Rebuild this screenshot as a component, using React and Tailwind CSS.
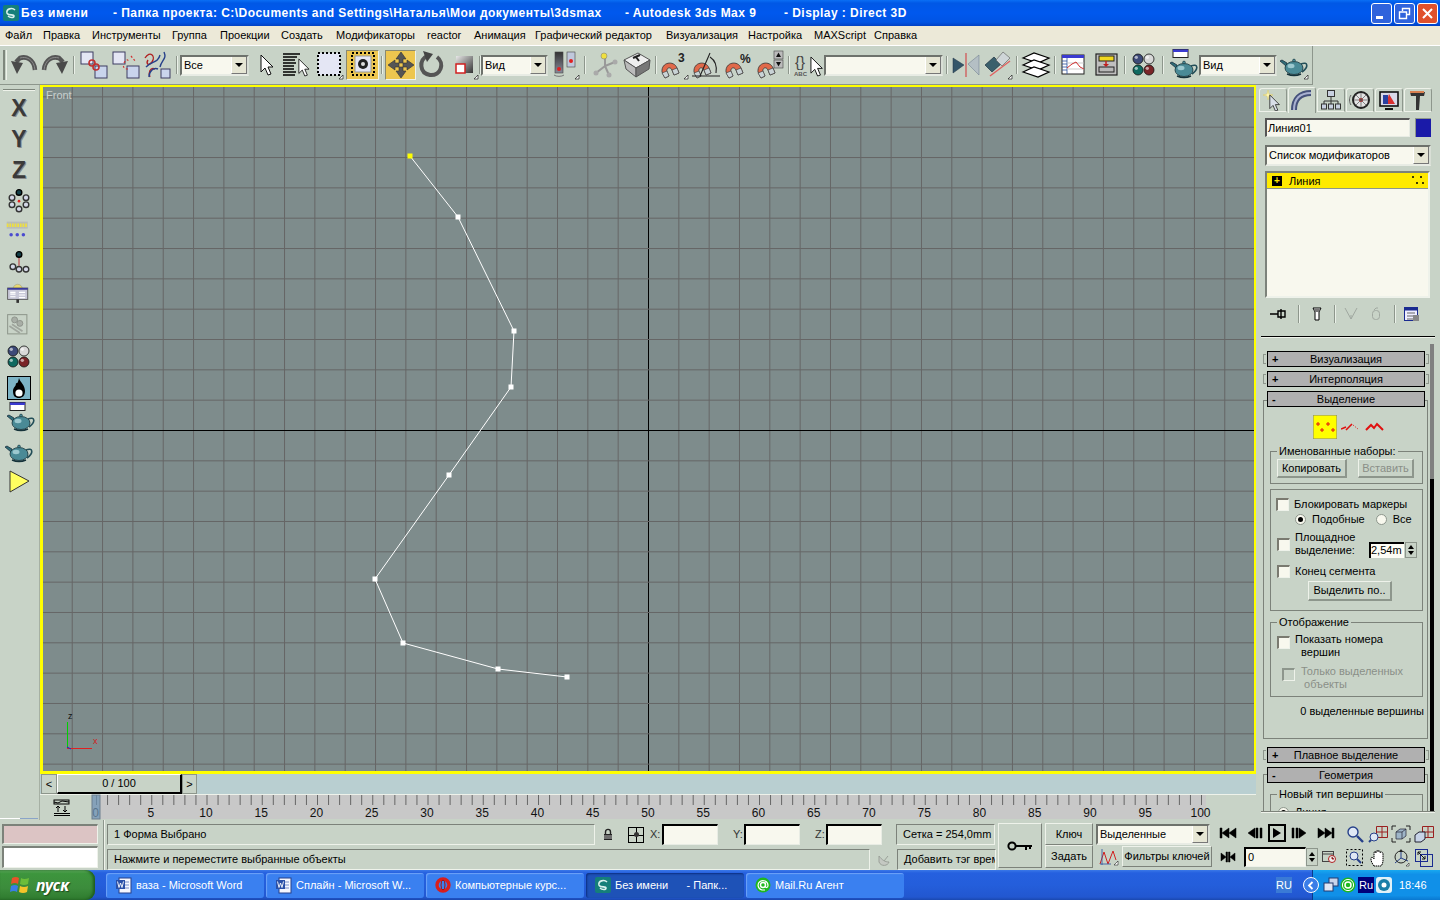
import React from 'react';

const Ic = ({ children, size = 32, box = '0 0 32 32', className = '' }) => (
  <svg width={size} height={size} viewBox={box} className={`block shrink-0 ${className}`}>{children}</svg>
);

const Fly = () => <polygon points="26,30 30,30 30,26" fill="#fff" stroke="#000" strokeWidth="0.6" />;

const Sphere = ({ cx, cy, r = 5, fill }) => (
  <g>
    <circle cx={cx} cy={cy} r={r} fill={fill} stroke="#111" strokeWidth="0.8" />
    <circle cx={cx - r / 3} cy={cy - r / 3} r={r / 3} fill="#fff" opacity="0.6" />
  </g>
);

const Spheres = () => (
  <Ic>
    <Sphere cx={10} cy={10} fill="#3d4a78" />
    <Sphere cx={21} cy={10} fill="#d8d8d8" />
    <Sphere cx={10} cy={21} fill="#0f6a60" />
    <Sphere cx={21} cy={21} fill="#7a2528" />
  </Ic>
);

const TeapotShape = () => (
  <g>
    <path d="M8 17 L2 12 L4 11 L9 14 Z" fill="#2f6d78" stroke="#123" strokeWidth="0.7" />
    <path d="M23 15 C30 12 31 18 24 23" fill="none" stroke="#234e58" strokeWidth="1.6" />
    <ellipse cx="16" cy="19" rx="9" ry="6.5" fill="#4a8a96" stroke="#15323a" strokeWidth="0.8" />
    <ellipse cx="13" cy="17" rx="3.5" ry="2.2" fill="#9cc8cf" />
    <path d="M9 25 Q16 28 23 25" stroke="#15323a" strokeWidth="1.4" fill="none" />
    <circle cx="16" cy="11.5" r="1.4" fill="#4a8a96" stroke="#15323a" strokeWidth="0.6" />
  </g>
);

const Teapot = ({ fly }) => <Ic><TeapotShape />{fly && <Fly />}</Ic>;

const RenderTeapot = () => (
  <Ic>
    <rect x="7" y="0.5" width="15" height="8" fill="#fff" stroke="#222" />
    <rect x="7" y="0.5" width="15" height="2.5" fill="#3a3ad0" />
    <g transform="translate(2 2)"><TeapotShape /></g>
  </Ic>
);

const Magnet = ({ x = 0, y = 0 }) => (
  <g transform={`translate(${x} ${y})`}>
    <path d="M6 25 L3 19 C2 9 15 7 18 15 L20 20 L15 22 L13 17 C11 13 7 15 8 19 L10 23 Z" fill="#e0694a" stroke="#333" strokeWidth="0.8" />
    <path d="M6 25 L3 20 L8 18 L10 23 Z M15 22 L20 20 L18 15 L13 17 Z" fill="#c9d3d6" stroke="#333" strokeWidth="0.6" />
  </g>
);

const Arrow = ({ x = 0, y = 0, s = 1 }) => (
  <g transform={`translate(${x} ${y}) scale(${s})`}>
    <path d="M1 0 L1 17 L5 13 L8 20 L11 19 L8 12 L13 12 Z" fill="#fff" stroke="#111" strokeWidth="1" />
  </g>
);

const Undo = ({ flip }) => (
  <Ic>
    <g transform={flip ? 'translate(32 0) scale(-1 1)' : undefined}>
      <path d="M27 21 C26 10 18 7 12 9 L8 13" fill="none" stroke="#555" strokeWidth="4.5" />
      <path d="M27 21 C26 10 18 7 12 9" fill="none" stroke="#8a8a8a" strokeWidth="1" />
      <polygon points="3,12 15,14 9,25" fill="#4a4a4a" />
    </g>
  </Ic>
);

const LinkIcon = ({ broken }) => (
  <Ic>
    <rect x="3" y="3" width="12" height="12" fill="#e4e6f4" stroke="#3c3c62" />
    <rect x="17" y="17" width="12" height="12" fill="#c9d4ec" stroke="#3c3c62" />
    {broken ? (
      <g fill="none" stroke="#d03030" strokeWidth="1.2" strokeDasharray="2 2">
        <path d="M14 14 C16 10 19 10 18 13" />
        <path d="M18 20 C13 20 13 16 14 17" />
        <path d="M21 7 L26 13" />
      </g>
    ) : (
      <g fill="none" stroke="#c03030" strokeWidth="1.6">
        <circle cx="14" cy="14" r="3" />
        <circle cx="18" cy="18" r="3" />
      </g>
    )}
  </Ic>
);

const BindIcon = () => (
  <Ic>
    <path d="M3 9 C8 1 14 7 10 13 C6 18 4 14 6 11 M13 20 C8 18 6 24 8 28" fill="none" stroke="#b02020" strokeWidth="1.4" />
    <path d="M4 18 C10 12 16 14 18 6 M18 18 C20 10 25 10 22 3 M7 28 C7 22 12 18 16 20" fill="none" stroke="#26408a" strokeWidth="1.4" />
    <rect x="19" y="20" width="9" height="9" fill="#c9d4ec" stroke="#3c3c62" />
  </Ic>
);

const NameSel = () => (
  <Ic>
    <g stroke="#000" strokeWidth="1.3">
      <path d="M2 5H19M2 8H16M2 11H14M2 14H15M2 17H13M2 20H13M2 23H15M2 26H14" />
    </g>
    <Arrow x={17} y={10} s={0.85} />
  </Ic>
);

const RectSel = ({ circle, fly }) => (
  <Ic>
    <rect x="5" y="4" width="22" height="22" fill={circle ? 'none' : '#e4e6f4'} stroke="#000" strokeWidth="2" strokeDasharray="2 2" />
    {circle ? (
      <g>
        <rect x="8" y="7" width="16" height="16" fill="#e4e6f4" stroke="#999" />
        <circle cx="16" cy="15" r="5" fill="#222" />
        <circle cx="16" cy="15" r="2" fill="#ddd" />
      </g>
    ) : null}
    {fly && <Fly />}
  </Ic>
);

const MoveIcon = () => (
  <Ic>
    <g fill="#555" stroke="#333" strokeWidth="0.6">
      <polygon points="16,3 21,10 18,10 18,14 14,14 14,10 11,10" />
      <polygon points="16,29 21,22 18,22 18,18 14,18 14,22 11,22" />
      <polygon points="3,16 10,11 10,14 14,14 14,18 10,18 10,21" />
      <polygon points="29,16 22,11 22,14 18,14 18,18 22,18 22,21" />
    </g>
  </Ic>
);

const RotateIcon = () => (
  <Ic>
    <path d="M11 7 C3 11 3 24 14 26 C25 27 29 14 21 8" fill="none" stroke="#555" strokeWidth="4" />
    <polygon points="7,2 17,5 11,13" fill="#444" />
  </Ic>
);

const ScaleIcon = () => (
  <Ic>
    <defs>
      <linearGradient id="scaleG" x1="0" y1="0" x2="1" y2="1">
        <stop offset="0" stopColor="#e8e8e8" />
        <stop offset="1" stopColor="#333" />
      </linearGradient>
    </defs>
    <rect x="8" y="7" width="17" height="17" fill="url(#scaleG)" />
    <rect x="8" y="15" width="9" height="9" fill="#fff" stroke="#d02020" strokeWidth="1.5" />
    <Fly />
  </Ic>
);

const PivotIcon = () => (
  <Ic>
    <defs>
      <linearGradient id="pivG" x1="0" y1="0" x2="0" y2="1">
        <stop offset="0" stopColor="#333" />
        <stop offset="1" stopColor="#8a8a9a" />
      </linearGradient>
    </defs>
    <rect x="6" y="3" width="8" height="21" fill="url(#pivG)" stroke="#444" strokeWidth="0.6" />
    <rect x="18" y="3" width="8" height="15" fill="#c0c8dc" stroke="#444" strokeWidth="0.6" />
    <circle cx="10" cy="20" r="2" fill="#e02020" />
    <circle cx="22" cy="12" r="2" fill="#e02020" />
    <path d="M5 26 A6 3 0 0 0 15 26" fill="none" stroke="#777" />
    <Fly />
  </Ic>
);

const AxisIcon = () => (
  <Ic>
    <path d="M16 8V17L7 24M16 17L26 13M16 17L20 26" stroke="#999" strokeWidth="2" fill="none" />
    <circle cx="15" cy="7" r="3" fill="#f0e040" stroke="#777" strokeWidth="0.5" />
    <circle cx="7" cy="24" r="2.5" fill="#aaa" />
    <circle cx="26" cy="13" r="2.5" fill="#aaa" />
    <circle cx="20" cy="26" r="2.5" fill="#aaa" />
  </Ic>
);

const BoxIcon = () => (
  <Ic>
    <polygon points="3,11 17,4 29,11 15,19" fill="#eee" stroke="#555" />
    <polygon points="3,11 15,19 15,28 5,20" fill="#bbb" stroke="#555" />
    <polygon points="29,11 15,19 15,28 28,20" fill="#777" stroke="#555" />
    <path d="M12 9 L19 6 M15 8 L18 12" stroke="#222" strokeWidth="2" />
  </Ic>
);

const Snap3 = () => (
  <Ic>
    <Magnet x={1} y={4} />
    <text x="20" y="13" fontSize="12" fontWeight="700" fontFamily="Liberation Sans" fill="#222">3</text>
    <Fly />
  </Ic>
);

const SnapAngle = () => (
  <Ic>
    <Magnet x={1} y={4} />
    <path d="M2 27H30M10 27L20 4M20 8 C26 12 27 18 26 24" stroke="#222" strokeWidth="1.1" fill="none" />
  </Ic>
);

const SnapPct = () => (
  <Ic>
    <Magnet x={1} y={4} />
    <text x="18" y="14" fontSize="12" fontWeight="700" fontFamily="Liberation Sans" fill="#222">%</text>
  </Ic>
);

const SnapSpin = () => (
  <Ic>
    <Magnet x={1} y={4} />
    <rect x="20" y="2" width="9" height="8" fill="#bbb" stroke="#444" strokeWidth="0.6" />
    <rect x="20" y="11" width="9" height="8" fill="#bbb" stroke="#444" strokeWidth="0.6" />
    <polygon points="24.5,3.5 27,8 22,8" fill="#111" />
    <polygon points="24.5,17.5 27,13 22,13" fill="#111" />
  </Ic>
);

const NamedSets = () => (
  <Ic>
    <text x="3" y="18" fontSize="15" fontFamily="Liberation Sans" fill="#444">{'{}'}</text>
    <text x="2" y="27" fontSize="6" fontWeight="700" fontFamily="Liberation Sans" fill="#555">ABC</text>
    <Arrow x={18} y={8} s={0.95} />
  </Ic>
);

const MirrorIcon = () => (
  <Ic>
    <polygon points="3,9 14,16 3,24" fill="#34566a" stroke="#234" strokeWidth="0.5" />
    <path d="M16 4V28" stroke="#d06060" strokeWidth="1.4" />
    <polygon points="29,6 18,15 29,26" fill="#b4bfc4" stroke="#678" strokeWidth="0.5" />
  </Ic>
);

const AlignIcon = () => (
  <Ic>
    <polygon points="3,16 12,8 19,15 10,23" fill="#3a5f6c" stroke="#123" strokeWidth="0.6" />
    <polygon points="14,11 21,3 28,9 20,17" fill="#cfd6d8" stroke="#555" strokeWidth="0.6" />
    <path d="M8 27L28 12" stroke="#e06060" strokeWidth="1.4" />
    <Fly />
  </Ic>
);

const LayersIcon = () => (
  <Ic>
    {[4, 11, 18].map(y => (
      <polygon key={y} points={`3,${y + 5} 14,${y} 29,${y + 5} 18,${y + 10}`} fill="#fff" stroke="#000" strokeWidth="1.2" />
    ))}
  </Ic>
);

const CurveEd = () => (
  <Ic>
    <rect x="5" y="6" width="22" height="19" fill="#fff" stroke="#222" />
    <rect x="5" y="6" width="22" height="3" fill="#3a3ad0" />
    <path d="M10 9V25M5 12H10M5 15H10M5 18H10M5 21H10" stroke="#2a50a0" strokeWidth="0.8" />
    <path d="M10 20H27M10 14H27" stroke="#c0c0c0" strokeWidth="0.8" />
    <path d="M10 19 L15 15 L19 13 L23 18 L27 20" stroke="#d03030" fill="none" />
  </Ic>
);

const SchematicIcon = () => (
  <Ic>
    <rect x="6" y="5" width="21" height="21" fill="#bfbfbf" stroke="#222" strokeWidth="1.2" />
    <rect x="9" y="7" width="15" height="5" fill="#f0d820" stroke="#222" />
    <rect x="9" y="18" width="15" height="5" fill="#b8b8b8" stroke="#222" />
    <path d="M16 12V17" stroke="#c02020" strokeWidth="1.5" />
    <polygon points="13,15 19,15 16,18" fill="#c02020" />
  </Ic>
);

const Tb = ({ w = 'w-[32px]', active, children }) => (
  <div className={`${w} h-[30px] flex items-center justify-center shrink-0 ${active ? 'bg-[#edc64f] border-t border-l border-t-[#8a8a70] border-l-[#8a8a70] border-r border-b border-r-[#eef2ea] border-b-[#eef2ea]' : ''}`}>
    {children}
  </div>
);

const Sep = ({ w = 'w-[6px]' }) => (
  <div className={`${w} h-[30px] flex items-center justify-center shrink-0`}>
    <div className="w-[2px] h-[18px] border-l border-l-[#8d968c] border-r border-r-[#eaf0e8]" />
  </div>
);

const Dropdown = ({ w, h = 'h-[21px]', label, text = 'text-[11px]' }) => (
  <div className={`${w} ${h} shrink-0 flex items-center border-t-2 border-l-2 border-t-[#6e726c] border-l-[#6e726c] border-r-2 border-b-2 border-r-[#d9dfd6] border-b-[#e8ece4] bg-[#f8f8ee]`}>
    <span className={`flex-1 pl-[2px] truncate ${text}`}>{label}</span>
    <div className="w-[16px] h-full bg-[#e6e6d4] border-l border-l-white border-r border-r-[#777] border-b border-b-[#777] flex items-center justify-center">
      <div className="w-0 h-0 border-l-[4px] border-r-[4px] border-t-[4px] border-l-transparent border-r-transparent border-t-black" />
    </div>
  </div>
);

const menuItems = [
  ['Файл', 'w-[38px]'], ['Правка', 'w-[49px]'], ['Инструменты', 'w-[80px]'], ['Группа', 'w-[48px]'],
  ['Проекции', 'w-[61px]'], ['Создать', 'w-[55px]'], ['Модификаторы', 'w-[91px]'], ['reactor', 'w-[47px]'],
  ['Анимация', 'w-[61px]'], ['Графический редактор', 'w-[131px]'], ['Визуализация', 'w-[82px]'],
  ['Настройка', 'w-[66px]'], ['MAXScript', 'w-[60px]'], ['Справка', 'w-[60px]'],
];

const TitleBar = () => (
  <div className="h-[26px] shrink-0 flex items-center bg-[linear-gradient(180deg,#0a6ff5_0%,#0058e6_12%,#0058ee_50%,#0054e4_85%,#0040c4_100%)] text-white font-bold text-[12px] whitespace-pre pl-[3px]">
    <svg width="16" height="16" viewBox="0 0 16 16" className="shrink-0">
      <rect width="16" height="16" rx="2" fill="#157f7a" />
      <path d="M12 5 C9 2 3 4 4 8 C5 11 11 9 11 11 C11 13 7 13 5 11" stroke="#d8f0ee" strokeWidth="1.6" fill="none" />
    </svg>
    <span className="ml-[2px] w-[92px] tracking-[0.6px]">Без имени</span>
    <span className="w-[512px] tracking-[0.46px]">- Папка проекта: C:\Documents and Settings\Наталья\Мои документы\3dsmax</span>
    <span className="w-[159px] tracking-[0.45px]">- Autodesk 3ds Max 9</span>
    <span className="tracking-[0.45px]">- Display : Direct 3D</span>
    <div className="ml-auto flex gap-[2px] pr-[2px]">
      <div className="w-[21px] h-[21px] rounded-[3px] border border-white bg-[#2f63dc] flex items-end justify-start p-[4px]">
        <div className="w-[7px] h-[3px] bg-white" />
      </div>
      <div className="w-[21px] h-[21px] rounded-[3px] border border-white bg-[#2f63dc] flex items-center justify-center">
        <svg width="13" height="13" viewBox="0 0 13 13"><path d="M4.5 4V1.5H11.5V7.5H9M1.5 5H8.5V11.5H1.5Z" fill="none" stroke="#fff" strokeWidth="1.4" /></svg>
      </div>
      <div className="w-[21px] h-[21px] rounded-[3px] border border-white bg-[#e0512c] flex items-center justify-center">
        <svg width="13" height="13" viewBox="0 0 13 13"><path d="M2 2L11 11M11 2L2 11" stroke="#fff" strokeWidth="2" /></svg>
      </div>
    </div>
  </div>
);

const MenuBar = () => (
  <div className="h-[20px] shrink-0 bg-[#ece9d8] flex items-center pl-[5px] border-b border-b-white text-[11px] text-black">
    {menuItems.map(([label, w]) => (
      <span key={label} className={`${w} whitespace-nowrap shrink-0`}>{label}</span>
    ))}
  </div>
);

const Toolbar = () => (
  <div className="h-[39px] w-[1313px] shrink-0 flex items-center border-r border-b border-r-[#8d968c] border-b-[#8d968c]">
    <div className="ml-[3px] mr-[1px] w-[4px] h-[30px] border-l-2 border-r border-l-[#7e867c] border-r-[#eef2ea]" />
    <Tb w="w-[31px]"><Undo /></Tb>
    <Tb w="w-[31px]"><Undo flip /></Tb>
    <Sep w="w-[8px]" />
    <Tb><LinkIcon /></Tb>
    <Tb><LinkIcon broken /></Tb>
    <Tb><BindIcon /></Tb>
    <Sep />
    <Dropdown w="w-[69px]" label="Все" />
    <div className="w-[2px]" />
    <Tb w="w-[30px]"><Ic><Arrow x={10} y={6} s={1} /></Ic></Tb>
    <Tb w="w-[31px]"><NameSel /></Tb>
    <Tb w="w-[34px]"><RectSel fly /></Tb>
    <Tb w="w-[33px]" active><RectSel circle /></Tb>
    <Sep w="w-[6px]" />
    <Tb w="w-[31px]" active><MoveIcon /></Tb>
    <Tb><RotateIcon /></Tb>
    <Tb w="w-[31px]"><ScaleIcon /></Tb>
    <Sep w="w-[2px]" />
    <Dropdown w="w-[67px]" label="Вид" />
    <Tb w="w-[33px]"><PivotIcon /></Tb>
    <Sep w="w-[8px]" />
    <Tb><AxisIcon /></Tb>
    <Tb><BoxIcon /></Tb>
    <Sep w="w-[5px]" />
    <Tb><Snap3 /></Tb>
    <Tb><SnapAngle /></Tb>
    <Tb><SnapPct /></Tb>
    <Tb><SnapSpin /></Tb>
    <Sep />
    <Tb><NamedSets /></Tb>
    <Dropdown w="w-[119px]" label="" />
    <Sep w="w-[7px]" />
    <Tb><MirrorIcon /></Tb>
    <Tb><AlignIcon /></Tb>
    <Sep />
    <Tb><LayersIcon /></Tb>
    <Sep w="w-[5px]" />
    <Tb><CurveEd /></Tb>
    <Tb w="w-[33px]"><SchematicIcon /></Tb>
    <Sep />
    <Tb><Spheres /></Tb>
    <Sep />
    <Tb><RenderTeapot /></Tb>
    <div className="w-[1px]" />
    <Dropdown w="w-[78px]" label="Вид" />
    <Tb w="w-[33px]"><Teapot fly /></Tb>
  </div>
);

const Axis = ({ children }) => (
  <span className="font-black text-[23px] leading-none text-[#3a3a3a] [text-shadow:1px_1px_0_#8a8a8a]">{children}</span>
);

const NodeGroup = ({ pts, hub }) => (
  <Ic size={28}>
    {hub}
    {pts.map(([x, y, dark]) => (
      <circle key={`${x}-${y}`} cx={x} cy={y} r="3.2" fill={dark ? '#123f48' : '#d4d8e8'} stroke={dark ? '#000' : '#333'} strokeWidth="1.6" />
    ))}
  </Ic>
);

const LeftCell = ({ h = 'h-[31px]', children }) => (
  <div className={`${h} flex items-center justify-center shrink-0`}>{children}</div>
);

const LeftBar = () => (
  <div className="w-[40px] shrink-0 flex flex-col border-r border-r-[#a6b0a4] pr-[1px]">
    <div className="h-[8px] flex items-start pt-[4px] pl-[3px]">
      <div className="w-[32px] h-[2px] border-t border-t-[#7e867c] border-b border-b-[#eef2ea]" />
    </div>
    <LeftCell><Axis>X</Axis></LeftCell>
    <LeftCell><Axis>Y</Axis></LeftCell>
    <LeftCell><Axis>Z</Axis></LeftCell>
    <LeftCell>
      <NodeGroup
        pts={[[16, 5, true], [8, 11], [24, 11], [8, 19], [24, 19], [16, 24]]}
        hub={<circle cx="16" cy="15" r="1.5" fill="#e02020" />}
      />
    </LeftCell>
    <LeftCell>
      <Ic size={28}>
        <rect x="2" y="3" width="24" height="8" fill="#b9bdb8" />
        <path d="M2 6H26M2 8H26" stroke="#eee040" strokeWidth="2" strokeDasharray="2 1" />
        <circle cx="7" cy="18" r="2" fill="#4a4ad0" /><circle cx="14" cy="18" r="2" fill="#4a4ad0" /><circle cx="21" cy="18" r="2" fill="#4a4ad0" />
      </Ic>
    </LeftCell>
    <LeftCell>
      <NodeGroup
        pts={[[16, 5, true], [9, 19], [16, 22], [24, 22]]}
        hub={<path d="M16 7V18" stroke="#c06060" strokeWidth="1.6" />}
      />
    </LeftCell>
    <LeftCell>
      <Ic size={28}>
        <path d="M9 9 C10 2 19 2 20 9Z" fill="#e8d870" stroke="#888" strokeWidth="0.5" />
        <rect x="3" y="8" width="23" height="13" fill="#c8c8d8" stroke="#555" />
        <rect x="3" y="8" width="23" height="2" fill="#3a3a9a" />
        <path d="M6 13H12M6 15H12M6 18H12M16 13H23M16 16H23M16 19H23" stroke="#fff" strokeWidth="1.2" />
        <rect x="13" y="21" width="3" height="4" fill="#333" />
      </Ic>
    </LeftCell>
    <LeftCell>
      <Ic size={28}>
        <rect x="3" y="3" width="22" height="22" fill="none" stroke="#8f988d" strokeWidth="1.2" />
        <circle cx="11" cy="9" r="3.4" fill="#a8aea6" stroke="#8a9088" />
        <circle cx="17" cy="13" r="3.4" fill="#a8aea6" stroke="#8a9088" />
        <path d="M5 16L17 24M8 14L20 22" stroke="#a0a69e" strokeWidth="2" />
      </Ic>
    </LeftCell>
    <LeftCell><Spheres /></LeftCell>
    <LeftCell>
      <div className="w-[24px] h-[24px] bg-[#7db4c6] border border-black flex items-center justify-center">
        <svg width="18" height="20" viewBox="0 0 18 20">
          <path d="M9 0 C10 4 15 7 15 13 C15 18 12 20 9 20 C5 20 3 18 3 13 C3 9 6 9 6 5 C7 6 8 5 9 0Z" fill="#000" />
          <circle cx="9" cy="15" r="3.6" fill="#fff" />
        </svg>
      </div>
    </LeftCell>
    <LeftCell h="h-[30px]"><RenderTeapot /></LeftCell>
    <LeftCell h="h-[35px]"><Teapot /></LeftCell>
    <LeftCell h="h-[25px]">
      <Ic size={24} box="0 0 24 24">
        <polygon points="3,2 22,12 3,23" fill="#ffff60" stroke="#333" />
      </Ic>
    </LeftCell>
    <div className="mt-auto mb-[1px] h-px flex">
      <div className="w-[20px] bg-white" /><div className="w-[18px] bg-[#8aa4c8]" />
    </div>
  </div>
);

const splinePts = [[410, 156], [458, 217], [514, 331], [511, 387], [449, 475], [375, 579], [403, 643], [498, 669], [567, 677]];
const gridSteps = Array.from({ length: 41 }, (_, i) => i - 20);

const Viewport = () => (
  <div className="relative h-[689px] w-[1216px] border-l-[3px] border-r-[2px] border-t-[2px] border-b-[3px] border-[#ffff00] bg-[#7e8c8c] overflow-hidden shrink-0">
    <svg width="1211" height="684" viewBox="43 87 1211 684" className="block">
      {gridSteps.map(k => (
        <line key={`v${k}`} x1={648.5 + k * 30.33} x2={648.5 + k * 30.33} y1="87" y2="771" stroke={k === 0 ? '#000' : '#666666'} />
      ))}
      {gridSteps.map(k => (
        <line key={`h${k}`} y1={430.5 + k * 30.33} y2={430.5 + k * 30.33} x1="43" x2="1254" stroke={k === 0 ? '#000' : '#666666'} />
      ))}
      <polyline points={splinePts.map(p => p.join(',')).join(' ')} fill="none" stroke="#fff" />
      {splinePts.map(([x, y], i) => (
        <rect key={x} x={x - 2.5} y={y - 2.5} width="5" height="5" fill={i === 0 ? '#ffff00' : '#fff'} />
      ))}
      <line x1="67.5" y1="722" x2="67.5" y2="748" stroke="#00d000" />
      <line x1="67" y1="748.5" x2="92" y2="748.5" stroke="#e02020" />
      <line x1="67" y1="747" x2="71" y2="749" stroke="#2020d0" />
      <text x="68" y="719" fontSize="9" fontFamily="Liberation Sans" fill="#111">z</text>
      <text x="93" y="744" fontSize="9" fontFamily="Liberation Sans" fill="#d02020">x</text>
    </svg>
    <span className="absolute left-[3px] top-[2px] text-[11px] leading-[13px] text-[#c8cfcc]">Front</span>
  </div>
);

const Slider = () => (
  <div className="h-[20px] shrink-0 bg-[#b9cfd1] flex">
    <div className="ml-[1px] w-[16px] h-[20px] bg-[#c8d3c7] border border-[#8d968c] flex items-center justify-center text-[11px]">&lt;</div>
    <div className="w-[125px] h-[20px] bg-[#c8d3c7] border-t border-l border-t-white border-l-white border-r-2 border-b-2 border-r-black border-b-black flex items-center justify-center text-[11px]">0 / 100</div>
    <div className="w-[15px] h-[20px] bg-[#c8d3c7] border border-[#8d968c] flex items-center justify-center text-[11px]">&gt;</div>
  </div>
);

const frames = Array.from({ length: 101 }, (_, i) => i);

const TrackBar = () => (
  <svg width="1216" height="26" viewBox="40 794 1216 26" className="block shrink-0">
    <rect x="92" y="795" width="1114" height="24" fill="#c8c8c8" />
    <line x1="40" y1="794.5" x2="1256" y2="794.5" stroke="#eef2ea" />
    {frames.map(f => (
      <line key={f} x1={96.5 + f * 11.05} x2={96.5 + f * 11.05} y1="795" y2="805" stroke="#666" />
    ))}
    {frames.filter(f => f % 5 === 0).map(f => (
      <text key={f} x={95.5 + f * 11.05} y="817" fontSize="12" textAnchor="middle" fontFamily="Liberation Sans" fill="#111">{f}</text>
    ))}
    <rect x="92" y="795" width="8" height="24" fill="#6f94b4" fillOpacity="0.75" stroke="#6d7f8d" />
    <g stroke="#000" fill="none">
      <rect x="54" y="800" width="15" height="4" />
      <path d="M54 802 L58 803 L62 801 L69 802" />
      <path d="M54 813.5H70M54 815.5H70" />
      <path d="M58 806V812M65 806V812" />
      <path d="M56 808L58 806L60 808M63 810L65 812L67 810" />
    </g>
  </svg>
);

const Tab = ({ active, children }) => (
  <div className={`w-[28px] ${active ? 'h-[26px] -mt-[1px]' : 'h-[24px] border-b border-b-[#eef2ea]'} flex items-center justify-center border-t border-l border-r border-t-[#eef2ea] border-l-[#eef2ea] border-r-[#8d968c] rounded-t-[3px] shrink-0`}>
    {children}
  </div>
);

const TabIcon = ({ children }) => <svg width="22" height="22" viewBox="0 0 22 22">{children}</svg>;

const Tabs = () => (
  <div className="h-[27px] pt-[3px] pl-[3px] flex gap-[1px] items-start shrink-0">
    <Tab>
      <TabIcon>
        <path d="M6 1L7 5L11 6L7 7L6 11L5 7L1 6L5 5Z" fill="#fff6b0" stroke="#d8c860" strokeWidth="0.5" />
        <g transform="translate(7 6) scale(0.8)"><path d="M1 0 L1 17 L5 13 L8 20 L11 19 L8 12 L13 12 Z" fill="#d8dee8" stroke="#222" /></g>
      </TabIcon>
    </Tab>
    <Tab active>
      <TabIcon>
        <path d="M3 20 C3 9 9 3 20 3" fill="none" stroke="#44507a" strokeWidth="6" />
        <path d="M3 20 C3 9 9 3 20 3" fill="none" stroke="#a8b0d0" strokeWidth="2" />
      </TabIcon>
    </Tab>
    <Tab>
      <TabIcon>
        <path d="M11 7V12M4 15V12H18V15M11 12V15" stroke="#333" fill="none" />
        <rect x="7.5" y="1.5" width="7" height="6" fill="#c8d0e0" stroke="#333" />
        <rect x="1.5" y="15" width="5" height="5" fill="#c8d0e0" stroke="#333" />
        <rect x="8.5" y="15" width="5" height="5" fill="#c8d0e0" stroke="#333" />
        <rect x="15.5" y="15" width="5" height="5" fill="#c8d0e0" stroke="#333" />
      </TabIcon>
    </Tab>
    <Tab>
      <TabIcon>
        <circle cx="12" cy="11" r="8" fill="#e4e4e4" stroke="#222" strokeWidth="2" />
        <circle cx="12" cy="11" r="2" fill="#d02020" />
        <path d="M12 4V18M5 11H19M7 6L17 16M17 6L7 16" stroke="#555" strokeWidth="0.7" />
        <path d="M2 6 C0 9 0 13 2 16" stroke="#666" fill="none" />
      </TabIcon>
    </Tab>
    <Tab>
      <TabIcon>
        <rect x="2" y="3" width="18" height="14" fill="#d8d8e8" stroke="#111" strokeWidth="1.6" />
        <polygon points="11,5 17,15 8,15" fill="#d83030" />
        <rect x="5" y="6" width="5" height="9" fill="#2a40a0" />
        <path d="M7 20H15" stroke="#111" strokeWidth="2" />
      </TabIcon>
    </Tab>
    <Tab>
      <TabIcon>
        <path d="M3 3H18L17 7H13L12 21H9L9 7H4Z" fill="#333" />
        <path d="M3 3H17" stroke="#d88050" strokeWidth="2" />
      </TabIcon>
    </Tab>
  </div>
);

const Slot = ({ children, w = 'w-[1px]' }) => (
  <div className={`${w} flex items-center justify-center shrink-0`}>{children}</div>
);

const Check = ({ disabled, className = '' }) => (
  <div className={`w-[13px] h-[13px] shrink-0 border-t-2 border-l-2 border-r border-b border-r-[#eef2ea] border-b-[#eef2ea] ${disabled ? 'border-t-[#8d968c] border-l-[#8d968c] bg-[#c8d3c7]' : 'border-t-[#7a7a70] border-l-[#7a7a70] bg-[#f8f8ee]'} ${className}`} />
);

const Radio = ({ on }) => (
  <div className="w-[11px] h-[11px] rounded-full bg-[#f8f8ee] border border-[#8d968c] flex items-center justify-center shrink-0">
    {on && <div className="w-[5px] h-[5px] rounded-full bg-black" />}
  </div>
);

const RolloutHead = ({ sign, label, open }) => (
  <div className="relative mx-[11px] h-[16px] w-[158px] shrink-0 bg-[#b0b0b0] border border-black flex items-center justify-center text-[11px] leading-none">
    <span className="absolute left-[4px] top-[1px] font-bold text-[11px] leading-[13px]">{sign}</span>
    <span>{label}</span>
    {!open && <span className="absolute -left-[5px] top-[2px] w-[3px] h-[10px] border-l border-t border-b border-[#8d968c]" />}
    {!open && <span className="absolute -right-[5px] top-[2px] w-[3px] h-[10px] border-r border-t border-b border-[#8d968c]" />}
  </div>
);

const Group = ({ h, label, className = '', children }) => (
  <div className={`relative ${h} w-[153px] ml-[6px] border border-[#7c827a] ${className}`}>
    {label && <span className="absolute left-[6px] -top-[7px] bg-[#c8d3c7] px-[2px] text-[11px] leading-[13px] whitespace-nowrap">{label}</span>}
    {children}
  </div>
);

const PanelBtn = ({ className, disabled, children }) => (
  <div className={`h-[19px] flex items-center justify-center text-[11px] border-t border-l border-t-[#eef2ea] border-l-[#eef2ea] border-r-2 border-b-2 border-r-[#8d968c] border-b-[#8d968c] ${disabled ? 'text-[#8a8f88]' : ''} ${className}`}>
    {children}
  </div>
);

const RightPanel = () => (
  <div className="w-[184px] shrink-0 flex flex-col">
    <Tabs />
    <div className="flex mt-[6px] ml-[9px] gap-[5px] shrink-0">
      <div className="w-[145px] h-[19px] bg-[#f8f8ee] border-t-2 border-l-2 border-t-[#555] border-l-[#555] border-r border-b border-r-[#e8ece4] border-b-[#e8ece4] text-[11px] leading-[16px] pl-[1px]">Линия01</div>
      <div className="w-[16px] h-[19px] bg-[#1a1aa8] border-t border-l border-[#8d968c]" />
    </div>
    <div className="mt-[8px] ml-[9px] shrink-0">
      <Dropdown w="w-[166px]" h="h-[21px]" label="Список модификаторов" />
    </div>
    <div className="mt-[5px] ml-[9px] w-[165px] h-[127px] shrink-0 bg-[#f8f8ee] border-t-2 border-l-2 border-t-[#7c827a] border-l-[#7c827a] border-r-2 border-b-2 border-r-[#eef2ea] border-b-[#eef2ea]">
      <div className="h-[16px] bg-[#ffea00] border-b border-b-[#8d968c] flex items-center text-[11px] pl-[5px]">
        <div className="w-[10px] h-[10px] bg-black flex items-center justify-center text-[#ffea00] font-bold text-[10px] leading-none">+</div>
        <span className="ml-[7px] pt-px">Линия</span>
        <svg width="16" height="12" viewBox="0 0 16 12" className="ml-auto mr-[3px]">
          <path d="M3 2H5M4 1V3M11 2H13M12 1V3M7 8H9M8 7V9M13 8H15M14 7V9" stroke="#000" />
        </svg>
      </div>
    </div>
    <div className="h-[39px] pb-[7px] flex items-center shrink-0">
      <Slot w="w-[36px] ml-[6px]">
        <svg width="20" height="12" viewBox="0 0 20 12"><path d="M0 6H8M8 3H15V9H8ZM11 1V11" stroke="#000" strokeWidth="1.4" fill="none" /></svg>
      </Slot>
      <Sep w="w-[2px]" />
      <Slot w="w-[34px]">
        <svg width="10" height="14" viewBox="0 0 10 14"><path d="M1 1H9L7 5V13H3V5Z" fill="#fff" stroke="#000" /><path d="M2 2H8L7 5H3Z" fill="#777" /></svg>
      </Slot>
      <Sep w="w-[2px]" />
      <Slot w="w-[30px]">
        <svg width="14" height="14" viewBox="0 0 14 14"><path d="M1 1L7 12L13 1M7 12V8" stroke="#a0a8a0" fill="none" /></svg>
      </Slot>
      <Slot w="w-[20px]">
        <svg width="10" height="14" viewBox="0 0 10 14"><rect x="1.5" y="3.5" width="7" height="9" rx="3" fill="none" stroke="#a0a8a0" /><path d="M3 3L5 1H7" stroke="#a0a8a0" fill="none" /></svg>
      </Slot>
      <div className="w-[8px]" />
      <Sep w="w-[2px]" />
      <Slot w="w-[32px]">
        <svg width="16" height="15" viewBox="0 0 16 15"><rect x="0.5" y="0.5" width="13" height="13" fill="#eef" stroke="#1a2a90" /><rect x="0.5" y="0.5" width="13" height="3" fill="#1a2a90" /><path d="M3 6H11M3 9H11M3 12H15" stroke="#666" /><rect x="9" y="8" width="6" height="6" fill="#888" /></svg>
      </Slot>
    </div>
    <div className="ml-[5px] w-[174px] h-[2px] shrink-0 border-t border-t-black border-b border-b-[#eef2ea] mt-[-1px]" />
    <div className="relative mt-[6px] h-[467px] overflow-hidden flex flex-col shrink-0 pt-[7px] text-[11px]">
      <div className="absolute left-[174px] top-0 w-[4px] h-full bg-black" />
      <div className="absolute left-[174px] top-0 w-[4px] h-[135px] bg-[#808080]" />
      <RolloutHead sign="+" label="Визуализация" />
      <div className="mt-[4px]"><RolloutHead sign="+" label="Интерполяция" /></div>
      <div className="relative z-10 mt-[4px]"><RolloutHead sign="-" label="Выделение" open /></div>
      <div className="-mt-[7px] ml-[7px] w-[165px] h-[339px] shrink-0 border border-[#7c827a]">
        <div className="mt-[14px] h-[24px] flex items-center justify-center pl-[6px]">
          <svg width="24" height="24" viewBox="0 0 24 24" className="block">
            <rect width="24" height="24" fill="#ffff00" stroke="#808080" />
            <path d="M3 9H7M5 7V11M13 9H17M15 7V11M7 15H11M9 13V17M18 15H22M20 13V17" stroke="#e01010" />
          </svg>
          <svg width="20" height="10" viewBox="0 0 20 10" className="ml-[4px]">
            <path d="M0 7L5 5M5 8L11 2" stroke="#e01010" strokeWidth="1.6" fill="none" />
            <path d="M12 3L17 7" stroke="#e01010" strokeDasharray="1 1.5" />
          </svg>
          <svg width="19" height="10" viewBox="0 0 19 10" className="ml-[4px]">
            <path d="M1 8L6 3L9 6L12 2L18 8" stroke="#e01010" strokeWidth="2" fill="none" />
          </svg>
        </div>
        <Group h="h-[33px]" label="Именованные наборы:" className="mt-[12px]">
          <div className="flex pt-[7px] pl-[6px]">
            <PanelBtn className="w-[70px]">Копировать</PanelBtn>
            <PanelBtn className="w-[56px] ml-[11px]" disabled>Вставить</PanelBtn>
          </div>
        </Group>
        <Group h="h-[122px]" className="mt-[5px]">
          <div className="flex items-center h-[14px] mt-[7px] pl-[5px]">
            <Check />
            <span className="ml-[5px] whitespace-nowrap">Блокировать маркеры</span>
          </div>
          <div className="flex items-center h-[14px] mt-[1px] pl-[24px]">
            <Radio on />
            <span className="ml-[6px]">Подобные</span>
            <div className="ml-[11px]"><Radio /></div>
            <span className="ml-[6px]">Все</span>
          </div>
          <div className="flex items-center h-[26px] mt-[5px] pl-[6px]">
            <Check />
            <div className="ml-[5px] w-[73px] leading-[13px]">Площадное выделение:</div>
            <div className="ml-[1px] mt-[12px] w-[35px] h-[16px] bg-[#fdfdf5] border-t-2 border-l-2 border-t-black border-l-black text-[11px] leading-[13px]">2,54m</div>
            <div className="ml-[1px] mt-[12px] w-[12px] h-[16px] flex flex-col justify-center items-center gap-[2px] border border-[#8d968c]">
              <div className="w-0 h-0 border-l-[3px] border-r-[3px] border-b-[4px] border-l-transparent border-r-transparent border-b-black" />
              <div className="w-0 h-0 border-l-[3px] border-r-[3px] border-t-[4px] border-l-transparent border-r-transparent border-t-black" />
            </div>
          </div>
          <div className="flex items-center h-[14px] mt-[7px] pl-[6px]">
            <Check />
            <span className="ml-[5px] whitespace-nowrap">Конец сегмента</span>
          </div>
          <PanelBtn className="w-[84px] ml-[37px] mt-[3px] h-[20px]">Выделить по..</PanelBtn>
        </Group>
        <Group h="h-[75px]" label="Отображение" className="mt-[11px]">
          <div className="flex items-start mt-[10px] pl-[6px]">
            <Check className="mt-[3px]" />
            <div className="ml-[5px] leading-[13px] whitespace-pre">{'Показать номера\n  вершин'}</div>
          </div>
          <div className="flex items-start mt-[6px] pl-[11px] text-[#8a8f88]">
            <Check disabled className="mt-[3px]" />
            <div className="ml-[6px] leading-[13px] whitespace-pre">{'Только выделенных\n объекты'}</div>
          </div>
        </Group>
        <div className="mt-[6px] pr-[3px] text-right whitespace-nowrap">0 выделенные вершины</div>
      </div>
      <div className="mt-[8px]"><RolloutHead sign="+" label="Плавное выделение" /></div>
      <div className="relative z-10 mt-[4px]"><RolloutHead sign="-" label="Геометрия" open /></div>
      <div className="-mt-[9px] ml-[7px] w-[165px] h-[60px] shrink-0 border-t border-l border-r border-[#7c827a]">
        <Group h="h-[40px]" label="Новый тип вершины" className="mt-[19px] border-b-0">
          <div className="flex items-center h-[14px] mt-[10px] pl-[7px]">
            <Radio on />
            <span className="ml-[6px]">Линия</span>
          </div>
        </Group>
      </div>
    </div>
    <div className="ml-[5px] w-[174px] h-[2px] border-t border-t-[#7c827a] border-b border-b-[#eef2ea] shrink-0" />
  </div>
);

const Sunken = ({ w, children }) => (
  <div className={`${w} h-[21px] shrink-0 bg-[#f8f8ee] border-t-2 border-l-2 border-t-black border-l-black border-r border-b border-r-[#e8ece4] border-b-[#e8ece4] text-[11px] leading-[17px] pl-[2px]`}>{children}</div>
);

const StatusBox = ({ w, children }) => (
  <div className={`${w} h-[21px] shrink-0 flex items-center pl-[6px] border-t border-l border-t-[#7c827a] border-l-[#7c827a] border-r border-b border-r-[#eef2ea] border-b-[#eef2ea] text-[11px] whitespace-nowrap overflow-hidden`}>{children}</div>
);

const XBtn = ({ className = '', children }) => (
  <div className={`flex items-center justify-center border-t border-l border-t-[#eef2ea] border-l-[#eef2ea] border-r border-b border-r-[#7c827a] border-b-[#7c827a] text-[11px] shrink-0 ${className}`}>{children}</div>
);

const Play = ({ d }) => <svg width="20" height="14" viewBox="0 0 20 14" className="block"><path d={d} fill="#000" stroke="#000" strokeWidth="0.5" /></svg>;

const AnimControls = () => (
  <div className="ml-[2px] mt-[2px] w-[128px] flex flex-col shrink-0">
    <div className="flex items-center h-[22px]">
      <div className="w-[26px] flex justify-center"><Play d="M2 2H4V12H2ZM11 2V12L4 7ZM18 2V12L11 7Z" /></div>
      <div className="w-[27px] flex justify-center"><Play d="M10 2V12L3 7ZM11 2H13V12H11ZM15 2H17V12H15Z" /></div>
      <div className="w-[18px] h-[18px] border-2 border-black flex items-center justify-center">
        <div className="w-0 h-0 border-t-[5px] border-b-[5px] border-l-[8px] border-t-transparent border-b-transparent border-l-black" />
      </div>
      <div className="w-[26px] flex justify-center"><Play d="M3 2H5V12H3ZM7 2H9V12H7ZM10 2L17 7L10 12Z" /></div>
      <div className="w-[28px] flex justify-center"><Play d="M2 2V12L9 7ZM9 2V12L16 7ZM16 2H18V12H16Z" /></div>
    </div>
    <div className="flex items-center h-[24px] mt-[1px]">
      <div className="w-[26px] flex justify-center"><Play d="M3 3V11L8 7ZM8 2H9.5V12H8ZM10.5 2H12V12H10.5ZM17 3V11L12 7Z" /></div>
      <div className="ml-[3px] w-[62px] h-[20px] bg-[#f8f8ee] border-t-2 border-l-2 border-t-black border-l-black border-r border-b border-r-[#eef2ea] border-b-[#eef2ea] text-[11px] leading-[16px] pl-[2px]">0</div>
      <div className="w-[12px] h-[18px] flex flex-col items-center justify-center gap-[2px] border border-[#8d968c]">
        <div className="w-0 h-0 border-l-[3px] border-r-[3px] border-b-[4px] border-l-transparent border-r-transparent border-b-black" />
        <div className="w-0 h-0 border-l-[3px] border-r-[3px] border-t-[4px] border-l-transparent border-r-transparent border-t-black" />
      </div>
      <div className="w-[23px] flex justify-center">
        <svg width="15" height="14" viewBox="0 0 15 14"><rect x="0.5" y="1.5" width="11" height="10" fill="none" stroke="#444" /><path d="M0.5 4H11" stroke="#444" /><circle cx="10" cy="9" r="3.5" fill="#eee" stroke="#b02020" /><path d="M10 7V9H12" stroke="#b02020" /></svg>
      </div>
    </div>
  </div>
);

const NavGrid = () => (
  <div className="grid grid-cols-4 w-[92px] mt-[3px] shrink-0 gap-y-[3px] auto-rows-[21px] justify-items-center items-center">
    <svg width="18" height="18" viewBox="0 0 18 18"><circle cx="7" cy="7" r="5" fill="#dfe8f5" stroke="#26408a" strokeWidth="1.4" /><path d="M11 11L17 17" stroke="#26408a" strokeWidth="2.4" /></svg>
    <svg width="20" height="18" viewBox="0 0 20 18"><path d="M8.5 1.5H19.5V12.5H8.5ZM14 1.5V12.5M8.5 7H19.5" fill="none" stroke="#9a2020" /><circle cx="6" cy="12" r="4" fill="#dfe8f5" stroke="#26408a" /><path d="M3 15L1 17" stroke="#26408a" strokeWidth="2" /></svg>
    <svg width="20" height="18" viewBox="0 0 20 18"><path d="M1 5V1H5M15 1H19V5M1 13V17H5M15 17H19V13" fill="none" stroke="#222" /><path d="M5 7L9 4H15V11L11 14H5Z M5 7H11V14M11 7L15 4" fill="#9fb5c8" stroke="#223" strokeWidth="0.7" /></svg>
    <svg width="20" height="18" viewBox="0 0 20 18"><path d="M8.5 1.5H19.5V12.5H8.5ZM14 1.5V12.5M8.5 7H19.5" fill="none" stroke="#9a2020" /><path d="M1 10L5 7H11V14L7 17H1Z" fill="#c8d4e8" stroke="#223" /></svg>
    <svg width="18" height="18" viewBox="0 0 18 18"><rect x="0.5" y="0.5" width="16" height="16" fill="none" stroke="#000" strokeDasharray="2 2" /><circle cx="8" cy="7" r="4" fill="#dfe8f5" stroke="#26408a" /><path d="M11 10L15 14" stroke="#26408a" strokeWidth="2" /></svg>
    <svg width="18" height="18" viewBox="0 0 18 18"><path d="M5 17C2 13 1 9 3 8L5 10V4C5 2 7 2 7 4V3C7 1 9 1 9 3C9 1 11 1 11 3V4C12 2 14 3 14 5V11C14 14 13 16 12 17Z" fill="#fff" stroke="#000" strokeDasharray="1.5 0.6" /></svg>
    <svg width="18" height="18" viewBox="0 0 18 18"><path d="M9 1V9L3 14M9 9L16 12" stroke="#26408a" fill="none" /><circle cx="9" cy="8" r="6" fill="none" stroke="#222" /><polygon points="9,0 11,3 7,3" fill="#222" /><polygon points="14,17 17,17 17,14" fill="#fff" stroke="#000" strokeWidth="0.5" /></svg>
    <svg width="18" height="18" viewBox="0 0 18 18"><rect x="0.5" y="0.5" width="12" height="12" fill="#c8d3c7" stroke="#1a2a90" /><rect x="5.5" y="5.5" width="12" height="12" fill="none" stroke="#1a2a90" /><path d="M3 3L10 10M3 3H6M3 3V6M10 10H7M10 10V7" stroke="#111" /></svg>
  </div>
);

const StatusArea = () => (
  <div className="h-[50px] shrink-0 flex overflow-hidden">
    <div className="w-[100px] shrink-0 pt-[4px] pl-[2px] flex flex-col gap-[2px]">
      <div className="w-[96px] h-[20px] bg-[#dcc4c4] border-t-2 border-l-2 border-t-[#7c827a] border-l-[#7c827a] border-r border-b border-r-[#eef2ea] border-b-[#eef2ea]" />
      <div className="w-[96px] h-[22px] bg-white border-t-2 border-l-2 border-t-[#7c827a] border-l-[#7c827a] border-r border-b border-r-[#eef2ea] border-b-[#eef2ea]" />
    </div>
    <div className="w-[2px] ml-[3px] h-full border-l border-l-[#8d968c] border-r border-r-[#eef2ea]" />
    <div className="ml-[2px] w-[891px] shrink-0 pt-[4px] flex flex-col gap-[4px]">
      <div className="flex items-center">
        <StatusBox w="w-[488px]">1 Форма Выбрано</StatusBox>
        <div className="w-[26px] flex justify-center">
          <svg width="10" height="13" viewBox="0 0 10 13"><path d="M2.5 6V4C2.5 0.5 7.5 0.5 7.5 4V6" stroke="#222" strokeWidth="1.4" fill="none" /><rect x="1" y="6" width="8" height="6" fill="#222" /><path d="M1 8H9M1 10H9" stroke="#bbb" /></svg>
        </div>
        <div className="w-[16px] h-[16px] ml-[7px] border border-black relative flex items-center justify-center shrink-0">
          <div className="absolute left-1/2 top-0 h-full w-px bg-black" />
          <div className="absolute top-1/2 left-0 h-px w-full bg-black" />
          <div className="w-[5px] h-[5px] rounded-full bg-[#333] relative" />
        </div>
        <span className="ml-[6px] w-[12px] text-[11px] text-[#333]">X:</span>
        <Sunken w="w-[56px]" />
        <span className="ml-[15px] w-[11px] text-[11px] text-[#333]">Y:</span>
        <Sunken w="w-[56px]" />
        <span className="ml-[15px] w-[11px] text-[11px] text-[#333]">Z:</span>
        <Sunken w="w-[56px]" />
        <div className="ml-[14px]"><StatusBox w="w-[99px]">Сетка = 254,0mm</StatusBox></div>
      </div>
      <div className="flex items-center">
        <StatusBox w="w-[763px]">Нажмите и переместите выбранные объекты</StatusBox>
        <div className="w-[27px] flex justify-center">
          <svg width="14" height="14" viewBox="0 0 14 14"><path d="M2 3 C5 7 8 9 12 9 C11 13 4 14 2 9 Z" fill="#c4c8c2" stroke="#9aa098" /><path d="M7 8L11 3" stroke="#9aa098" /></svg>
        </div>
        <StatusBox w="w-[99px]">Добавить тэг врем</StatusBox>
      </div>
    </div>
    <XBtn className="w-[44px] h-[45px] mt-[3px]">
      <svg width="26" height="12" viewBox="0 0 26 12"><circle cx="5" cy="6" r="3.6" fill="none" stroke="#000" strokeWidth="2" /><path d="M9 6H25M19 6V10M23 6V9" stroke="#000" strokeWidth="2" fill="none" /></svg>
    </XBtn>
    <div className="ml-[3px] w-[48px] mt-[3px] flex flex-col shrink-0">
      <XBtn className="h-[22px]">Ключ</XBtn>
      <XBtn className="h-[23px]">Задать</XBtn>
    </div>
    <div className="ml-[3px] mt-[4px] w-[117px] shrink-0 flex flex-col gap-[1px]">
      <Dropdown w="w-[114px]" h="h-[21px]" label="Выделенные" />
      <div className="flex items-center">
        <div className="w-[26px] flex justify-center">
          <svg width="20" height="18" viewBox="0 0 20 18"><path d="M1 16 L5 4 L9 16 M9 16 L14 3 L17 12" stroke="#d02020" fill="none" /><path d="M1 16H12M3 1V17" stroke="#2a50a0" strokeWidth="0.8" /><polygon points="15,17 19,17 19,13" fill="#fff" stroke="#000" strokeWidth="0.5" /></svg>
        </div>
        <XBtn className="w-[90px] h-[21px] whitespace-nowrap overflow-hidden">Фильтры ключей</XBtn>
      </div>
    </div>
    <AnimControls />
    <NavGrid />
  </div>
);

const TaskBtn = ({ active, icon, children }) => (
  <div className={`w-[158px] h-[25px] rounded-[3px] shrink-0 flex items-center pl-[9px] gap-[4px] text-white text-[11px] whitespace-pre overflow-hidden ${active ? 'bg-[#1e52b7] shadow-[inset_1px_1px_2px_#0c2e80]' : 'bg-[#3a80f0] shadow-[inset_1px_1px_1px_#6ea2f8]'}`}>
    {icon}
    <span>{children}</span>
  </div>
);

const WordIcon = () => (
  <svg width="17" height="17" viewBox="0 0 17 17" className="shrink-0">
    <rect x="4" y="1" width="12" height="15" fill="#f4f6ff" stroke="#26408a" />
    <path d="M7 5H14M7 8H14M7 11H14" stroke="#7a90c8" />
    <rect x="1" y="3" width="9" height="9" fill="#2a50a8" />
    <path d="M2.5 4.5L4 10.5L5.5 6L7 10.5L8.5 4.5" stroke="#fff" fill="none" strokeWidth="0.9" />
  </svg>
);

const Taskbar = () => (
  <div className="h-[30px] shrink-0 flex items-center bg-[linear-gradient(180deg,#3a78e8_0%,#2560df_10%,#245edb_50%,#2257d0_90%,#1a48b0_100%)] relative">
    <div className="w-[95px] h-[30px] shrink-0 rounded-r-[9px] bg-[linear-gradient(180deg,#5fae5f_0%,#3d953d_12%,#3c8c3c_60%,#2e7a2e_100%)] flex items-center pl-[10px] shadow-[inset_-2px_0_3px_#1e5a1e]">
      <svg width="20" height="18" viewBox="0 0 20 18" className="shrink-0">
        <path d="M2 2 Q6 0 9 2 L8 8 Q5 6 1 8Z" fill="#e8532a" />
        <path d="M11 2 Q14 4 19 2 L18 8 Q14 10 10 8Z" fill="#6bbd3a" />
        <path d="M1 10 Q5 8 8 10 L7 16 Q4 14 0 16Z" fill="#3a7ee8" />
        <path d="M10 10 Q14 12 18 10 L17 16 Q13 18 9 16Z" fill="#f4c42a" />
      </svg>
      <span className="ml-[6px] font-bold italic text-[16px] text-white [text-shadow:1px_1px_1px_#1e4a1e] font-['Noto_Sans',sans-serif]">пуск</span>
    </div>
    <div className="ml-[11px] flex gap-[2px]">
      <TaskBtn icon={<WordIcon />}>ваза - Microsoft Word</TaskBtn>
      <TaskBtn icon={<WordIcon />}>Сплайн - Microsoft W...</TaskBtn>
      <TaskBtn icon={<svg width="16" height="16" viewBox="0 0 16 16" className="shrink-0"><circle cx="8" cy="8" r="6" fill="none" stroke="#d81e1e" strokeWidth="3.4" /><ellipse cx="8" cy="8" rx="2" ry="5" fill="none" stroke="#a01010" /></svg>}>Компьютерные курс...</TaskBtn>
      <TaskBtn active icon={<svg width="16" height="16" viewBox="0 0 16 16" className="shrink-0"><rect width="16" height="16" rx="2" fill="#157f7a" /><path d="M12 5 C9 2 3 4 4 8 C5 11 11 9 11 11 C11 13 7 13 5 11" stroke="#d8f0ee" strokeWidth="1.6" fill="none" /></svg>}>{'Без имени      - Папк...'}</TaskBtn>
      <TaskBtn icon={<svg width="16" height="16" viewBox="0 0 16 16" className="shrink-0"><circle cx="8" cy="8" r="7.5" fill="#1fb81f" /><circle cx="8" cy="8" r="2.5" fill="none" stroke="#fff" strokeWidth="1.4" /><path d="M10.5 5.5V9.5C10.5 11 13 11 13 8.5C13 4 8 2.5 5 4.5C2 6.5 2.5 12 7 13H10" fill="none" stroke="#fff" strokeWidth="1.2" /></svg>}>Mail.Ru Агент</TaskBtn>
    </div>
    <div className="ml-[372px] w-[16px] h-[16px] flex items-center justify-center bg-[#3a7ad6] text-white text-[11px]">RU</div>
    <div className="relative ml-[20px] flex-1 h-full flex items-center pl-[11px] bg-[linear-gradient(180deg,#18a8f0_0%,#1090e8_15%,#1090e8_85%,#0a78d0_100%)] border-l border-l-[#0a3a8a]">
      <div className="absolute -left-[10px] top-[7px] w-[16px] h-[16px] rounded-full bg-[#3a7ee8] border border-white flex items-center justify-center">
        <svg width="8" height="9" viewBox="0 0 8 9"><path d="M5.5 1L2 4.5L5.5 8" stroke="#fff" strokeWidth="1.8" fill="none" /></svg>
      </div>
      <svg width="16" height="16" viewBox="0 0 16 16" className="shrink-0 ml-[-1px]"><rect x="6" y="1" width="9" height="8" fill="#c8d4ec" stroke="#223a70" /><rect x="1" y="6" width="9" height="8" fill="#dfe6f5" stroke="#223a70" /></svg>
      <svg width="16" height="16" viewBox="0 0 16 16" className="shrink-0 ml-[1px]"><circle cx="8" cy="8" r="7.5" fill="#1fb81f" /><circle cx="8" cy="8" r="3" fill="none" stroke="#fff" strokeWidth="1.5" /><circle cx="8" cy="8" r="5.6" fill="none" stroke="#fff" strokeWidth="1" /></svg>
      <div className="ml-[2px] w-[16px] h-[16px] bg-[#00007a] text-white text-[11px] leading-[16px] text-center shrink-0">Ru</div>
      <svg width="16" height="16" viewBox="0 0 16 16" className="shrink-0 ml-[2px]"><rect width="16" height="16" rx="3" fill="#dff0f8" /><circle cx="8" cy="8" r="6" fill="#1a7fa8" /><circle cx="8" cy="8" r="2.5" fill="#fff" /></svg>
      <span className="ml-[7px] text-white text-[11px]">18:46</span>
    </div>
  </div>
);

export default function App() {
  return (
    <div className="w-[1440px] h-[900px] overflow-hidden flex flex-col bg-[#c8d3c7] text-black text-[11px] font-['Liberation_Sans',sans-serif]">
      <TitleBar />
      <MenuBar />
      <Toolbar />
      <div className="h-[735px] flex shrink-0">
        <LeftBar />
        <div className="w-[1216px] shrink-0 flex flex-col">
          <Viewport />
          <Slider />
          <TrackBar />
        </div>
        <RightPanel />
      </div>
      <StatusArea />
      <Taskbar />
    </div>
  );
}
